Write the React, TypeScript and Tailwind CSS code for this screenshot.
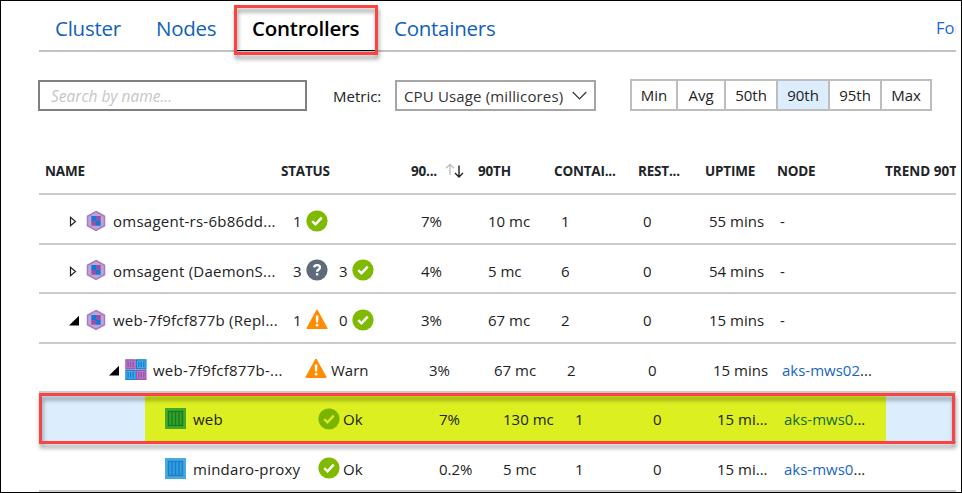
import React from "react";

const Ok = ({ tint = "#fff" }: { tint?: string }) => (
  <svg className="mt-[2px] block size-[22px] shrink-0" viewBox="0 0 22 22">
    <circle cx="11" cy="11" r="10.6" fill={tint === "#fff" ? "#7fba00" : "#79b400"} />
    <path d="M6.2 11.2l3.3 3.1 6.2-6.6" fill="none" stroke={tint} strokeWidth="2.5" />
  </svg>
);

const Unknown = () => (
  <svg className="mt-[2px] block size-[22px] shrink-0" viewBox="0 0 22 22">
    <circle cx="11" cy="11" r="10.6" fill="#5f6b7a" />
    <path d="M8.2 8.400c.2-3.200 5.800-3 5.800.1 0 2.200-2.900 2-2.900 4.300" fill="none" stroke="#fff" strokeWidth="2.400" />
    <rect x="9.900" y="14.200" width="2.400" height="2.300" fill="#fff" />
  </svg>
);

const Warning = () => (
  <svg className="mt-[2px] block size-[22px] shrink-0" viewBox="0 0 22 22">
    <path d="M11 1.500L20.800 19.300H1.200z" fill="#ff8c00" stroke="#ff8c00" strokeWidth="1.600" strokeLinejoin="round" />
    <path d="M9.700 6.500h2.800l-.4 7h-2z" fill="#fff" />
    <circle cx="11.100" cy="16.200" r="1.400" fill="#fff" />
  </svg>
);

const Controller = () => (
  <svg className="mr-px block h-[22px] w-[20px]" viewBox="0 0 20 22">
    <path d="M10 1.500l8.500 4.800v9.400L10 20.500l-8.500-4.800V6.300z" fill="#c3a3d4" stroke="#a77bbd" strokeWidth="1.500" />
    <path d="M5.300 6h4.700v5H5.300zM10 11h4.700v4.700H10z" fill="#0f7bd8" />
    <path d="M10 6h4.700v5H10zM5.300 11H10v4.700H5.300z" fill="#8f55a8" />
  </svg>
);

const PodTile = ({ x, y, fill, line }: { x: number; y: number; fill: string; line: string }) => (
  <g transform={`translate(${x} ${y})`}>
    <rect width="10.500" height="10.300" fill={fill} />
    <path d="M1.500 1.800h7.500v6.700H1.500zM4 1.800v6.700M6.500 1.800v6.700" fill="none" stroke={line} strokeWidth="1" />
  </g>
);

const Pod = () => (
  <svg className="mr-px block h-[21px] w-[22px]" viewBox="0 0 22 21">
    <PodTile x={0.3} y={0.2} fill="#9a55ad" line="#b67cc6" />
    <PodTile x={11} y={0.2} fill="#0f83d2" line="#55aee6" />
    <PodTile x={0.3} y={10.7} fill="#0f83d2" line="#55aee6" />
    <PodTile x={11} y={10.7} fill="#9a55ad" line="#b67cc6" />
  </svg>
);

const Container = ({ green = false }: { green?: boolean }) => (
  <svg className="mr-px block size-[21px]" viewBox="0 0 21 21">
    <rect width="21" height="21" fill={green ? "#46a82b" : "#48a9df"} />
    <path
      d="M3.500 3.500h14v14h-14zM7 3.500v14M10.500 3.500v14M14 3.500v14"
      fill={green ? "#35a02c" : "#3a9ddb"}
      stroke={green ? "#16801f" : "#1681cd"}
      strokeWidth="1.400"
    />
  </svg>
);

const Closed = () => (
  <svg className="block h-[11px] w-[10px]" viewBox="0 0 10 11">
    <path d="M1.500 1.300v8.400l5-4.200z" fill="#fff" stroke="#222" strokeWidth="1.200" />
  </svg>
);

const Open = () => (
  <svg className="block h-[11px] w-[10px]" viewBox="0 0 10 11">
    <path d="M10 .8v9.700H0z" fill="#000" />
  </svg>
);

type RowProps = {
  level: 0 | 1 | 2;
  toggle?: React.ReactNode;
  icon: React.ReactNode;
  name: string;
  status: React.ReactNode;
  values: string[];
  node: string;
  highlight?: boolean;
};

const grids = [
  "grid-cols-[40px_28px_6px_180px_128px_67px_73px_82px_66px_71px_1fr]",
  "grid-cols-[80px_29px_5px_152px_124px_65px_73px_81px_65px_69px_1fr]",
  "grid-cols-[109px_39px_6px_125px_121px_64px_72px_78px_64px_67px_1fr]",
];

function Row({ level, toggle, icon, name, status, values, node, highlight }: RowProps) {
  return (
    <div
      className={`grid h-[49.5px] shrink-0 items-center border-b-2 border-[#cbcbcb] pt-[2px] whitespace-nowrap ${grids[level]} ${
        highlight ? "bg-[linear-gradient(to_right,#dceefe_106px,#dcef20_106px,#dcef20_847px,#dceefe_847px)]" : ""
      }`}
    >
      <span className="flex justify-end pt-[4px]">{toggle}</span>
      <span className="flex justify-end pt-[2px]">{icon}</span>
      <span />
      <span className="pt-[3px] tracking-[0.25px]">{name}</span>
      <span className="flex items-center">{status}</span>
      {values.map((v, i) => (
        <span key={i} className="pt-[3px]">{v}</span>
      ))}
      <span className="pt-[3px]">
        {node === "-" ? (
          "-"
        ) : (
          <>
            <span className={highlight ? "text-[#146b35]" : "text-[#1566bd]"}>{node}</span>...
          </>
        )}
      </span>
    </div>
  );
}

const Count = ({ n }: { n: number }) => <span className="w-[13px] pt-[3px]">{n}</span>;

export default function App() {
  return (
    <div className="relative flex h-[493px] w-[962px] flex-col overflow-hidden border border-black bg-white pr-[5px] pl-[38px] font-['Open_Sans','Noto_Sans',sans-serif] text-[15px] leading-[20px] text-[#222]">
      <div className="flex h-[51px] shrink-0 items-center border-b-2 border-[#c2c2c2] text-[20.5px] tracking-[-0.25px] whitespace-nowrap text-[#1061b8]">
        <span className="ml-[16px] w-[101px] pt-[5px]">Cluster</span>
        <span className="w-[96px] pt-[5px]">Nodes</span>
        <span className="w-[142px] pt-[5px] font-semibold text-black">Controllers</span>
        <span className="pt-[5px]">Containers</span>
        <span className="ml-auto w-[20px] overflow-hidden pt-[4px] text-[16.5px] tracking-normal text-[#1668dc]">For</span>
      </div>

      <div className="mt-[27px] -ml-px flex h-[32px] shrink-0 items-center whitespace-nowrap">
        <div className="mt-px flex h-[31px] w-[269px] items-center border-2 border-[#808080] pl-[11px] text-[15.5px] text-[#c6c6c6] italic">
          Search by name...
        </div>
        <span className="ml-[26px] w-[62px] pt-px">Metric:</span>
        <div className="mt-px flex h-[31px] w-[201px] items-center justify-between border-2 border-[#a5a5a5] pr-[7px] pl-[7px] text-[#333]">
          <span className="tracking-[0.15px]">CPU Usage (millicores)</span>
          <svg className="h-[9px] w-[15px]" viewBox="0 0 15 9">
            <path d="M.7 1l6.800 6.800L14.300 1" fill="none" stroke="#333" strokeWidth="1.200" />
          </svg>
        </div>
        <div className="ml-[34px] flex h-[32px] border-2 border-[#bdbdbd] text-center leading-[28px]">
          <span className="w-[44px]">Min</span>
          <span className="w-[48px] border-l-2 border-[#bdbdbd]">Avg</span>
          <span className="w-[52px] border-l-2 border-[#bdbdbd]">50th</span>
          <span className="w-[52px] border-l-2 border-[#bdbdbd] bg-[#dceefe]">90th</span>
          <span className="w-[52px] border-l-2 border-[#bdbdbd]">95th</span>
          <span className="w-[50px] border-l-2 border-[#bdbdbd]">Max</span>
        </div>
      </div>

      <div className="grid h-[84px] shrink-0 grid-cols-[236px_130px_67px_76px_84px_67px_72px_109px_1fr] border-b-2 border-[#cbcbcb] pt-[50px] pl-[6px] text-[13.5px] font-bold tracking-[-0.2px] whitespace-nowrap text-[#202428]">
        <span>NAME</span>
        <span>STATUS</span>
        <span className="flex">
          <span className="w-[34px]">90...</span>
          <svg className="mt-[2px] h-[15px] w-[19px]" viewBox="0 0 19 15">
            <path d="M5 12V1.500M1 5.300l4-4 4 4" fill="none" stroke="#bbb" strokeWidth="1.300" />
            <path d="M14 2.500v11.300M10 10l4 4 4-4" fill="none" stroke="#222" strokeWidth="1.400" />
          </svg>
        </span>
        <span>90TH</span>
        <span>CONTAI...</span>
        <span>REST...</span>
        <span>UPTIME</span>
        <span>NODE</span>
        <span className="-ml-px overflow-hidden tracking-normal">TREND 90TH</span>
      </div>

      <Row level={0} toggle={<Closed />} icon={<Controller />} name="omsagent-rs-6b86dd..."
        status={<><Count n={1} /><Ok /></>} values={["7%", "10 mc", "1", "0", "55 mins"]} node="-" />
      <Row level={0} toggle={<Closed />} icon={<Controller />} name="omsagent (DaemonS..."
        status={<><Count n={3} /><Unknown /><span className="w-[11px]" /><Count n={3} /><Ok /></>} values={["4%", "5 mc", "6", "0", "54 mins"]} node="-" />
      <Row level={0} toggle={<Open />} icon={<Controller />} name="web-7f9fcf877b (Repl..."
        status={<><Count n={1} /><Warning /><span className="w-[11px]" /><Count n={0} /><Ok /></>} values={["3%", "67 mc", "2", "0", "15 mins"]} node="-" />
      <Row level={1} toggle={<Open />} icon={<Pod />} name="web-7f9fcf877b-..."
        status={<><Warning /><span className="pt-[3px] pl-[4px]">Warn</span></>} values={["3%", "67 mc", "2", "0", "15 mins"]} node="aks-mws02" />
      <Row level={2} icon={<Container green />} name="web" highlight
        status={<><Ok tint="#d5e92a" /><span className="pt-[3px] pl-[3px]">Ok</span></>} values={["7%", "130 mc", "1", "0", "15 mi..."]} node="aks-mws0" />
      <Row level={2} icon={<Container />} name="mindaro-proxy"
        status={<><Ok /><span className="pt-[3px] pl-[3px]">Ok</span></>} values={["0.2%", "5 mc", "1", "0", "15 mi..."]} node="aks-mws0" />

      <div className="absolute top-[4px] left-[233px] h-[50px] w-[144px] border-3 border-[#fa4343] drop-shadow-[1px_4px_2px_rgba(0,0,0,0.4)]" />
      <div className="absolute top-[48.500px] left-[236px] h-[1.500px] w-[138px] bg-black" />
      <div className="absolute top-[392px] left-[38px] h-[51px] w-[916px] border-3 border-[#fa4343] drop-shadow-[1px_4px_2px_rgba(0,0,0,0.4)]" />
    </div>
  );
}
